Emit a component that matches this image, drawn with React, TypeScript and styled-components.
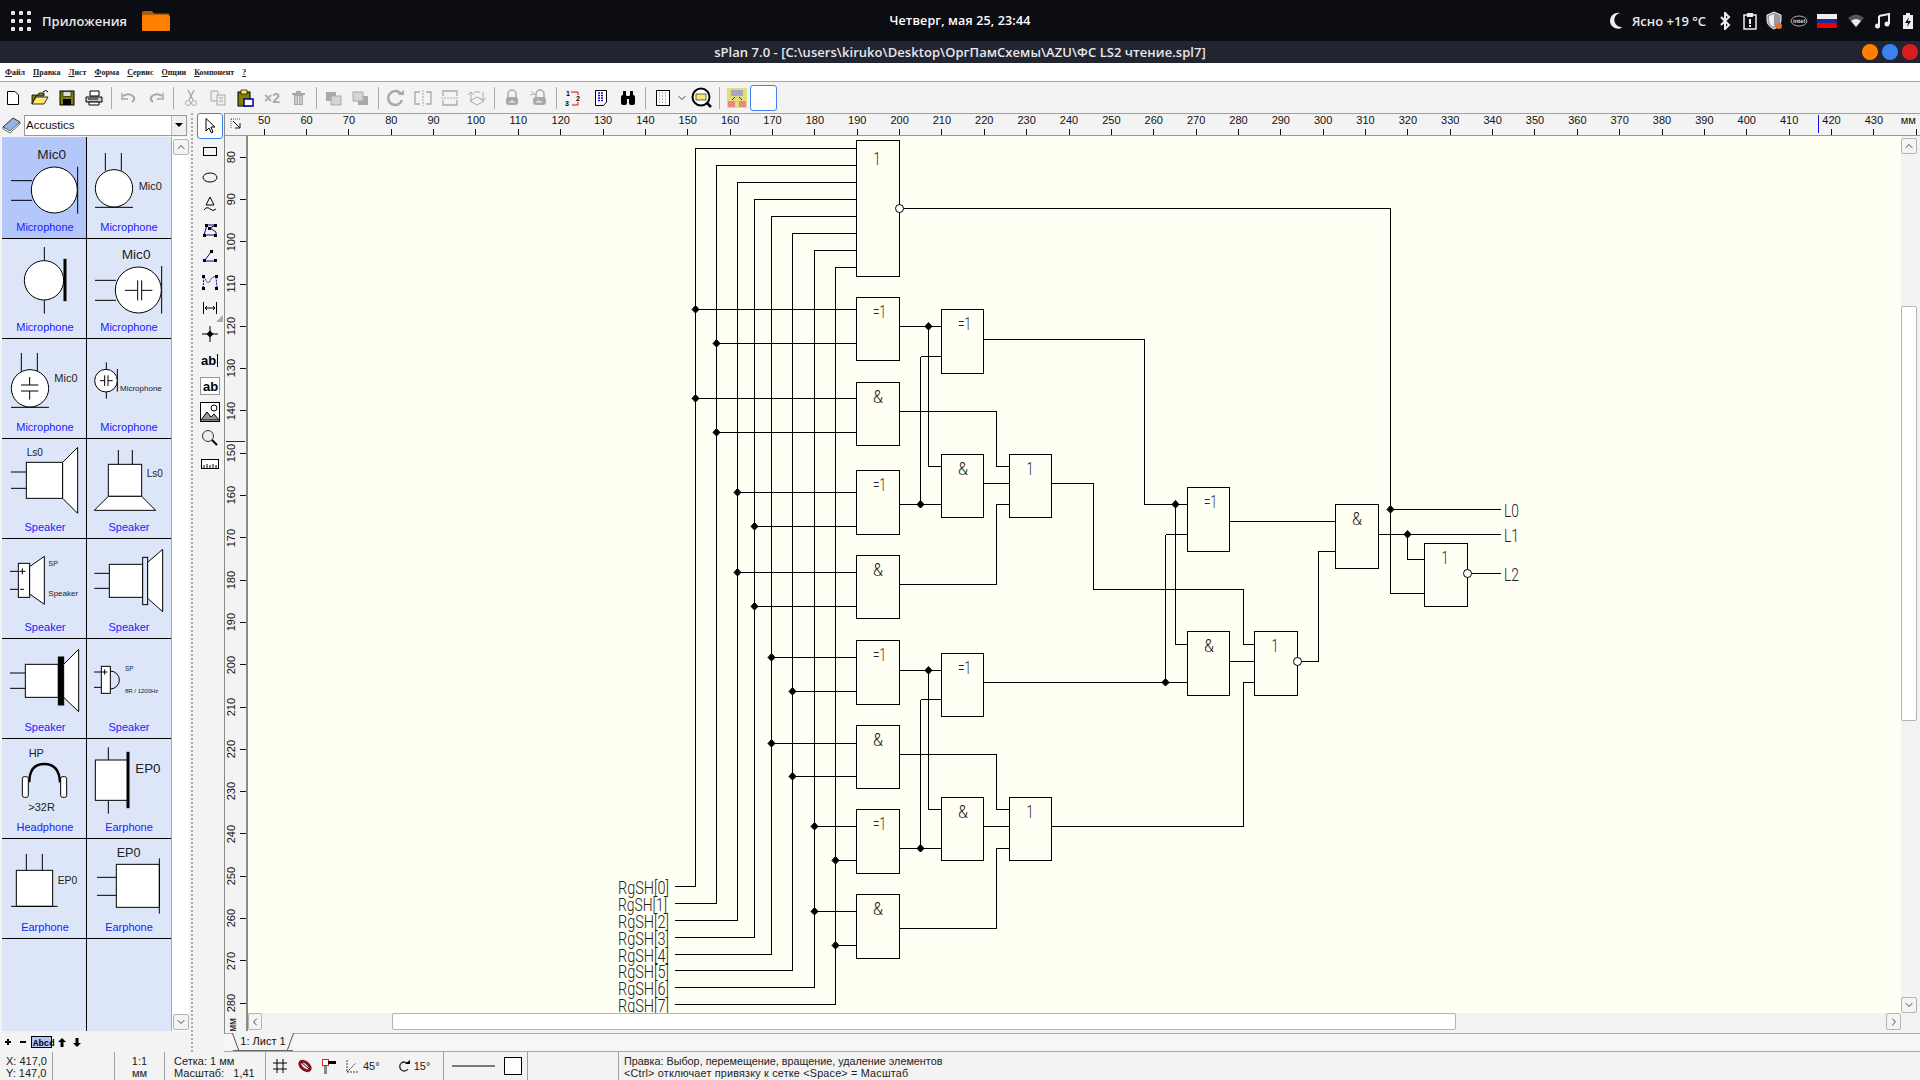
import React from "react";
import styled, { createGlobalStyle } from "styled-components";
import { ChevronUp, ChevronDown, ChevronLeft, ChevronRight } from "lucide-react";

const GlobalStyle = createGlobalStyle`
  html, body { margin: 0; padding: 0; background: #f3f3f3; }
  * { box-sizing: border-box; }
`;

const Page = styled.div`
  width: 1920px;
  height: 1080px;
  display: flex;
  flex-direction: column;
  overflow: hidden;
  background: #f3f3f3;
  font-family: "Liberation Sans", Arial, sans-serif;
  color: #111;
`;

/* ---------- desktop top bar ---------- */
const TopBar = styled.header`
  height: 41px;
  flex: none;
  display: grid;
  grid-template-columns: 1fr auto 1fr;
  align-items: center;
  background: #0b0d12;
  color: #e8e8e8;
  font-family: "Open Sans", "Noto Sans", sans-serif;
  font-size: 13px;
  font-weight: 600;
`;
const TopLeft = styled.div`
  display: flex;
  align-items: center;
  padding-left: 11px;
`;
const AppsGrid = styled.div`
  display: grid;
  grid-template-columns: repeat(3, 4px);
  grid-auto-rows: 4px;
  gap: 4px;
  span { background: #e4e4e4; border-radius: 1px; }
`;
const AppsLabel = styled.span`
  margin-left: 11px;
  width: 99px;
`;
const Clock = styled.div`
  font-size: 12.5px;
  letter-spacing: 0.15px;
  color: #fff;
`;
const TopRight = styled.div`
  display: flex;
  justify-content: flex-end;
  align-items: center;
  padding-right: 6px;
  svg { display: block; flex: none; }
`;
const Weather = styled.span`
  margin: 0 12px 0 8px;
  white-space: nowrap;
`;
const TrayGap = styled.span<{ $w: number }>`
  width: ${(p) => p.$w}px;
  flex: none;
`;

const TitleBar = styled.div`
  height: 22px;
  flex: none;
  display: grid;
  grid-template-columns: 1fr auto 1fr;
  align-items: center;
  background: #22252f;
  color: #e6e8ec;
  font-family: "Open Sans", "Noto Sans", sans-serif;
  font-size: 13px;
  font-weight: 600;
  letter-spacing: 0.05px;
`;
const WindowButtons = styled.div`
  grid-column: 3;
  display: flex;
  justify-content: flex-end;
  gap: 4px;
  padding-right: 2px;
`;
const WindowButton = styled.span<{ $color: string }>`
  width: 16px;
  height: 16px;
  border-radius: 50%;
  background: ${(p) => p.$color};
`;

/* ---------- menu + toolbar ---------- */
const MenuBar = styled.nav`
  height: 19px;
  flex: none;
  display: flex;
  align-items: center;
  gap: 8px;
  padding-left: 5px;
  background: #fff;
  border-bottom: 1px solid #a8a8a8;
  font-family: "Liberation Serif", serif;
  font-size: 8px;
  font-weight: 700;
  color: #222;
  u { text-decoration: underline; }
`;

const Toolbar = styled.div`
  height: 31px;
  flex: none;
  display: flex;
  align-items: center;
  margin-left: -1px;
  padding-top: 1px;
`;
const ToolButton = styled.div`
  width: 27px;
  height: 28px;
  flex: none;
  display: flex;
  align-items: center;
  justify-content: center;
  svg { display: block; }
`;
const ToolSep = styled.div`
  width: 1px;
  height: 22px;
  flex: none;
  margin: 0 3.5px;
  background: #aaa;
`;
const Chevron = styled(ToolButton)`
  width: 12px;
`;
const ToolBlank = styled.div`
  width: 27px;
  height: 26px;
  background: #fff;
  border: 1px solid #3b82f0;
  border-radius: 3px;
`;

/* ---------- main row ---------- */
const MainRow = styled.div`
  flex: 1;
  min-height: 0;
  display: flex;
`;

const PalettePanel = styled.aside`
  width: 190px;
  flex: none;
  display: flex;
  flex-direction: column;
`;
const PaletteHead = styled.div`
  height: 24px;
  flex: none;
  display: flex;
  align-items: center;
  padding-left: 2px;
  gap: 3px;
`;
const Combo = styled.div`
  width: 163px;
  height: 21px;
  display: flex;
  align-items: center;
  justify-content: space-between;
  background: #fff;
  border: 1px solid #9a9a9a;
  padding: 0 0 1px 1px;
  font-size: 11.5px;
`;
const ComboArrow = styled.span`
  width: 15px;
  height: 19px;
  margin-bottom: -1px;
  display: flex;
  align-items: center;
  justify-content: center;
  background: #f0f0f0;
  border-left: 1px solid #bbb;
  &::after {
    content: "";
    border-left: 4px solid transparent;
    border-right: 4px solid transparent;
    border-top: 4px solid #000;
  }
`;
const PaletteBody = styled.div`
  height: 894px;
  flex: none;
  display: flex;
  padding-left: 2px;
`;
const PaletteGrid = styled.div`
  width: 169px;
  flex: none;
  display: grid;
  grid-template-columns: 85px 84px;
  grid-template-rows: 102px repeat(7, 100px) 1fr;
  background: #dde6f8;
`;
const PaletteCell = styled.div<{ $active?: boolean; $right?: boolean; $last?: boolean }>`
  display: flex;
  flex-direction: column;
  justify-content: flex-end;
  align-items: center;
  padding-bottom: 4px;
  overflow: hidden;
  background: ${(p) => (p.$active ? "#b4c7fb" : "#dde6f8")};
  border-right: ${(p) => (p.$right ? "0" : "1px solid #000")};
  border-bottom: ${(p) => (p.$last ? "0" : "1px solid #000")};
`;
const CellLabel = styled.div<{ $shift?: boolean }>`
  height: 14px;
  line-height: 14px;
  margin-left: ${(p) => (p.$shift ? "2px" : "0")};
  font-size: 11px;
  color: #2020ff;
`;
const PaletteTrack = styled.div`
  width: 18px;
  flex: none;
  display: flex;
  flex-direction: column;
  align-items: center;
  justify-content: space-between;
  padding: 2px 0 1px;
  background: #fff;
  border-left: 1px solid #a8a8a8;
`;
const ScrollButton = styled.div<{ $w?: number; $h?: number }>`
  width: ${(p) => p.$w ?? 16}px;
  height: ${(p) => p.$h ?? 16}px;
  flex: none;
  display: flex;
  align-items: center;
  justify-content: center;
  background: #f4f4f4;
  border: 1px solid #b4b4b4;
  border-radius: 2px;
  color: #444;
`;
const PaletteTools = styled.div`
  flex: 1;
  display: flex;
  align-items: center;
  padding-left: 5px;
  svg { display: block; }
`;

const Splitter = styled.div`
  width: 5px;
  flex: none;
  margin-left: 1px;
  border-left: 2px dotted #aaa;
`;

const ToolColumn = styled.div`
  width: 28px;
  flex: none;
  display: flex;
  flex-direction: column;
  align-items: center;
  position: relative;
`;
const SideTool = styled.div<{ $active?: boolean }>`
  width: 26px;
  height: 26px;
  flex: none;
  display: flex;
  align-items: center;
  justify-content: center;
  border: ${(p) => (p.$active ? "1px solid #3b82f0" : "0")};
  border-radius: 3px;
  background: ${(p) => (p.$active ? "#fff" : "transparent")};
`;
const CornerMark = styled.span`
  position: absolute;
  right: 1px;
  top: 202px;
  border-left: 7px solid transparent;
  border-bottom: 7px solid #aaa;
`;

/* ---------- workspace ---------- */
const Workspace = styled.main`
  flex: 1;
  min-width: 0;
  display: flex;
  flex-direction: column;
  border-left: 1px solid #8a8a8a;
  border-top: 1px solid #a0a0a0;
`;
const HRuler = styled.div`
  height: 22px;
  flex: none;
  display: flex;
  position: relative;
  padding-left: 18px;
  overflow: hidden;
  border-bottom: 1px solid #9a9a9a;
  font-size: 11px;
`;
const CornerIcon = styled.svg`
  position: absolute;
  left: 5px;
  top: 4px;
`;
const HTick = styled.div<{ $last?: boolean }>`
  width: 42.36px;
  flex: none;
  display: flex;
  flex-direction: column;
  align-items: center;
  justify-content: flex-end;
  span { line-height: 13px; margin-bottom: 2px; padding-right: ${(p) => (p.$last ? "16px" : "0")}; }
  &::after { content: ""; width: 1px; height: 6px; background: #111; }
`;
const HMarker = styled.span`
  position: absolute;
  left: 1593px;
  top: 1px;
  width: 1px;
  height: 18px;
  background: #1010ee;
`;
const Body = styled.div`
  height: 895px;
  flex: none;
  display: flex;
`;
const VRuler = styled.div`
  width: 23px;
  flex: none;
  position: relative;
  overflow: hidden;
  font-size: 11px;
  border-right: 2px solid #8a8a8a;
`;
const VTick = styled.div`
  height: 42.3px;
  display: flex;
  align-items: center;
  justify-content: flex-end;
  span {
    writing-mode: vertical-rl;
    transform: rotate(180deg);
    margin-right: 3px;
    line-height: 12px;
  }
  &::after { content: ""; width: 6px; height: 1px; background: #111; }
`;
const VUnit = styled.div`
  display: flex;
  justify-content: center;
  padding-right: 5px;
  span {
    writing-mode: vertical-rl;
    transform: rotate(180deg);
    line-height: 12px;
    font-size: 10px;
    margin-top: -6px;
  }
`;
const VMarker = styled.span`
  position: absolute;
  left: 1px;
  top: 305px;
  width: 19px;
  height: 1px;
  background: #1010ee;
`;
const CanvasColumn = styled.div`
  flex: 1;
  min-width: 0;
  display: flex;
  flex-direction: column;
`;
const CanvasRow = styled.div`
  height: 877px;
  flex: none;
  display: flex;
`;
const Canvas = styled.div`
  width: 1653px;
  flex: none;
  background: #fffff3;
  svg { display: block; }
`;
const VScroll = styled.div`
  flex: 1;
  display: flex;
  flex-direction: column;
  padding: 2px 0 0;
`;
const VThumb = styled.div`
  width: 16px;
  height: 415px;
  margin-top: 152px;
  margin-bottom: 276px;
  background: #fff;
  border: 1px solid #b4b4b4;
  border-radius: 2px;
`;
const HScroll = styled.div`
  height: 17px;
  flex: none;
  display: flex;
`;
const HThumb = styled.div`
  width: 1064px;
  margin-left: 130px;
  margin-right: 430px;
  background: #fff;
  border: 1px solid #b4b4b4;
  border-radius: 2px;
`;
const TabRow = styled.div`
  flex: 1;
  margin-left: -1px;
  margin-top: 2px;
  display: flex;
  padding-left: 9px;
  background: #f6f6f6;
  border-top: 1px solid #a8a8a8;
  border-bottom: 1px solid #a8a8a8;
`;
const Tab = styled.div`
  position: relative;
  width: 60px;
  height: 18px;
  margin-top: -1px;
  background: #f3f3f3;
  border-bottom: 1px solid #666;
  font-size: 11px;
  line-height: 17px;
  text-align: center;
  &::before, &::after {
    content: "";
    position: absolute;
    top: 0;
    bottom: 0;
    width: 1px;
    background: #555;
  }
  &::before { left: 2px; transform: skewX(20deg); }
  &::after { right: 2px; transform: skewX(-20deg); }
`;

/* ---------- status bar ---------- */
const StatusBar = styled.footer`
  height: 28px;
  flex: none;
  display: flex;
  font-size: 11px;
  line-height: 12px;
  color: #222;
`;
const StatusCell = styled.div<{ $w: number; $center?: boolean; $pad?: number }>`
  width: ${(p) => p.$w}px;
  flex: none;
  padding: 3px 0 0 ${(p) => (p.$center ? 0 : p.$pad ?? 6)}px;
  text-align: ${(p) => (p.$center ? "center" : "left")};
  white-space: pre;
  border-right: 1px solid #a0a0a0;
`;
const StatusTools = styled.div<{ $w: number; $gap: number; $pad: number }>`
  width: ${(p) => p.$w}px;
  flex: none;
  display: flex;
  align-items: center;
  gap: ${(p) => p.$gap}px;
  padding-left: ${(p) => p.$pad}px;
  border-right: 1px solid #a0a0a0;
  svg { display: block; flex: none; }
`;
const StatusValue = styled.span`
  display: flex;
  align-items: center;
  gap: 3px;
`;
const RotateValue = styled(StatusValue)`
  margin-left: 8px;
`;
const StatusHint = styled.div`
  padding: 3px 0 0 5px;
  font-size: 10.8px;
  white-space: pre;
`;
const HintWide = styled.div`
  letter-spacing: 0.2px;
`;

const Art = styled.svg`
  display: block;
  flex: none;
  text { font-family: "Liberation Sans", Arial, sans-serif; fill: #222; stroke: none; }
`;

const DIAGRAM_FONT = { fontFamily: "Roboto, 'Liberation Sans', sans-serif", fontWeight: 300, fill: "#222" };

/* ---------- palette symbols, drawn in 3x units ---------- */
const Sym = ({ children }: { children: React.ReactNode }) => (
  <Art width={84} height={81} viewBox="0 0 252 243">
    <g fill="none" stroke="#000" strokeWidth={3}>{children}</g>
  </Art>
);

const palette: { label: string; art?: React.ReactNode; active?: boolean }[] = [
  { label: "Microphone", active: true, art: <>
    <path d="M27 125H90M27 184H90M227 83V224" />
    <circle cx={157} cy={153} r={69} fill="#fff" />
    <text x={106} y={61} fontSize={41}>Mic0</text>
  </> },
  { label: "Microphone", art: <>
    <path d="M55 42V95M103 42V95M24 205H138" />
    <circle cx={81} cy={148} r={56} fill="#fff" />
    <text x={155} y={153} fontSize={33}>Mic0</text>
  </> },
  { label: "Microphone", art: <>
    <path d="M127 24V64M127 184V224" />
    <circle cx={126} cy={124} r={59} fill="#fff" />
    <rect x={186} y={61} width={6} height={124} fill="#000" />
  </> },
  { label: "Microphone", art: <>
    <path d="M24 124H87M24 184H87M224 81V224" />
    <circle cx={154} cy={153} r={69} fill="#fff" />
    <path d="M114 154H152M152 124V184M164 124V184M164 154H196" />
    <text x={104} y={59} fontSize={41}>Mic0</text>
  </> },
  { label: "Microphone", art: <>
    <path d="M58 42V98M106 42V98M27 205H141" />
    <circle cx={84} cy={148} r={56} fill="#fff" />
    <path d="M57 138H109M57 156H109M83 114V138M83 156V182" />
    <text x={157} y={129} fontSize={33}>Mic0</text>
  </> },
  { label: "Microphone", art: <>
    <path d="M58 70V91M58 159V179M91 90V158" />
    <circle cx={57} cy={125} r={34} fill="#fff" />
    <path d="M39 125H53M53 109V141M63 109V141M63 125H77" />
    <text x={99} y={155} fontSize={24}>Microphone</text>
  </> },
  { label: "Speaker", art: <>
    <path d="M27 99H73M27 148H73" />
    <rect x={73} y={70} width={109} height={108} fill="#fff" />
    <path d="M182 70L227 25V223L182 178Z" fill="#fff" />
    <text x={74} y={51} fontSize={30}>Ls0</text>
  </> },
  { label: "Speaker", art: <>
    <path d="M94 33V76M136 33V76" />
    <rect x={64} y={76} width={100} height={96} fill="#fff" />
    <path d="M64 172L22 214H206L164 172Z" fill="#fff" />
    <text x={179} y={115} fontSize={30}>Ls0</text>
  </> },
  { label: "Speaker", art: <>
    <path d="M24 97H49M24 151H49" />
    <rect x={49} y={73} width={34} height={102} fill="#fff" />
    <path d="M83 83L127 52V196L83 165Z" fill="#fff" />
    <path d="M61 88V106M52 97H70M54 151H66" />
    <text x={139} y={82} fontSize={22}>SP</text>
    <text x={139} y={172} fontSize={24}>Speaker</text>
  </> },
  { label: "Speaker", art: <>
    <path d="M22 103H67M22 148H67" />
    <rect x={67} y={76} width={100} height={99} fill="#fff" />
    <rect x={167} y={55} width={15} height={142} fill="#dde6f8" />
    <path d="M182 70L227 31V218L182 178Z" fill="#fff" />
  </> },
  { label: "Speaker", art: <>
    <path d="M24 102H70M24 148H70" />
    <rect x={70} y={76} width={99} height={99} fill="#fff" />
    <rect x={169} y={54} width={16} height={144} fill="#000" />
    <path d="M185 76L230 31V218L185 175Z" fill="#fff" />
  </> },
  { label: "Speaker", art: <>
    <path d="M21 99H43M21 145H43" />
    <rect x={43} y={82} width={27} height={81} fill="#fff" />
    <path d="M70 96A27 27 0 0 1 70 150" />
    <path d="M53 91V107M45 99H61" />
    <text x={114} y={97} fontSize={19}>SP</text>
    <text x={114} y={163} fontSize={18}>8R / 1200Hz</text>
  </> },
  { label: "Headphone", art: <>
    <path d="M82 130C82 90 100 75 127 75C154 75 172 90 174 130" strokeWidth={7} />
    <rect x={61} y={113} width={18} height={62} rx={6} fill="#fff" />
    <rect x={176} y={113} width={18} height={62} rx={6} fill="#fff" />
    <text x={80} y={53} fontSize={33}>HP</text>
    <text x={79} y={215} fontSize={33}>&gt;32R</text>
  </> },
  { label: "Earphone", art: <>
    <path d="M64 25V63M64 184V224" />
    <rect x={25} y={63} width={99} height={121} fill="#fff" />
    <rect x={120} y={40} width={6} height={166} fill="#000" />
    <text x={145} y={101} fontSize={40}>EP0</text>
  </> },
  { label: "Earphone", art: <>
    <path d="M73 45V94M121 45V94" />
    <rect x={43} y={94} width={109} height={108} fill="#fff" />
    <path d="M27 202H167" />
    <text x={167} y={136} fontSize={31}>EP0</text>
  </> },
  { label: "Earphone", art: <>
    <path d="M30 115H88M30 169H88" />
    <rect x={88} y={76} width={129} height={129} fill="#fff" />
    <path d="M217 58V224" />
    <text x={89} y={55} fontSize={38}>EP0</text>
  </> },
];

/* ---------- schematic, in page coordinates ---------- */
type Gate = { x: number; y: number; w: number; h: number; t: string };
const gates: Gate[] = [
  { x: 856, y: 140, w: 43, h: 136, t: "1" },
  { x: 856, y: 297, w: 43, h: 63, t: "=1" },
  { x: 941, y: 309, w: 42, h: 64, t: "=1" },
  { x: 856, y: 382, w: 43, h: 63, t: "&" },
  { x: 856, y: 470, w: 43, h: 64, t: "=1" },
  { x: 941, y: 454, w: 42, h: 63, t: "&" },
  { x: 1009, y: 454, w: 42, h: 63, t: "1" },
  { x: 856, y: 555, w: 43, h: 63, t: "&" },
  { x: 856, y: 640, w: 43, h: 64, t: "=1" },
  { x: 941, y: 653, w: 42, h: 63, t: "=1" },
  { x: 856, y: 725, w: 43, h: 63, t: "&" },
  { x: 856, y: 809, w: 43, h: 64, t: "=1" },
  { x: 941, y: 797, w: 42, h: 63, t: "&" },
  { x: 1009, y: 797, w: 42, h: 63, t: "1" },
  { x: 856, y: 894, w: 43, h: 64, t: "&" },
  { x: 1187, y: 487, w: 42, h: 64, t: "=1" },
  { x: 1187, y: 631, w: 42, h: 64, t: "&" },
  { x: 1254, y: 631, w: 43, h: 64, t: "1" },
  { x: 1335, y: 504, w: 43, h: 64, t: "&" },
  { x: 1424, y: 543, w: 43, h: 63, t: "1" },
];

const busX = [695, 716, 737, 754, 771, 792, 814, 835];
const busTop = [148, 165, 182, 199, 216, 233, 250, 267];
const busBottom = [886, 903, 920, 937, 954, 970, 987, 1004];

const taps = [
  [695, 309], [716, 343], [695, 398], [716, 432],
  [737, 492], [754, 526], [737, 572], [754, 606],
  [771, 657], [792, 691], [771, 743], [792, 776],
  [814, 826], [835, 860], [814, 911], [835, 945],
];

const wires = [
  "899,208 1390,208 1390,593 1424,593",
  "899,326 941,326",
  "928,326 928,466 941,466",
  "920,356 941,356",
  "920,356 920,504",
  "899,504 941,504",
  "899,411 996,411 996,466 1009,466",
  "983,483 1009,483",
  "899,584 996,584 996,504 1009,504",
  "983,339 1144,339 1144,504 1187,504",
  "1051,483 1093,483 1093,589 1243,589 1243,644 1254,644",
  "899,670 941,670",
  "928,670 928,809 941,809",
  "920,699 941,699",
  "920,699 920,848",
  "899,848 941,848",
  "899,754 996,754 996,809 1009,809",
  "983,826 1009,826",
  "899,928 996,928 996,848 1009,848",
  "983,682 1187,682",
  "1051,826 1243,826 1243,682 1254,682",
  "1175,504 1175,644 1187,644",
  "1165,534 1187,534",
  "1165,534 1165,682",
  "1229,661 1254,661",
  "1229,521 1335,521",
  "1297,661 1318,661 1318,551 1335,551",
  "1378,534 1500,534",
  "1390,509 1500,509",
  "1407,534 1407,559 1424,559",
  "1467,573 1500,573",
];

const dots = [
  ...taps,
  [928, 326], [920, 504], [928, 670], [920, 848],
  [1175, 504], [1165, 682], [1390, 509], [1407, 534],
];

const bubbles = [[899, 208], [1297, 661], [1467, 573]];

const gateTextX = (g: Gate) => g.x + (g.t === "1" ? 21 : g.t === "&" ? 22 : 23.5);
const gateTextY = (g: Gate) => g.y + (g.t === "1" ? (g.h > 100 ? 25 : 21) : 21);

const Schematic = () => (
  <svg width={1653} height={877} viewBox="248 136 1653 877">
    <g transform="translate(.5 .5)" fill="none" stroke="#000" strokeWidth={1} shapeRendering="crispEdges">
      {busX.map((x, i) => (
        <polyline key={x} points={`674,${busBottom[i]} ${x},${busBottom[i]} ${x},${busTop[i]} 856,${busTop[i]}`} />
      ))}
      {taps.map(([x, y]) => <polyline key={`${x}-${y}`} points={`${x},${y} 856,${y}`} />)}
      {wires.map((w) => <polyline key={w} points={w} />)}
      {gates.map((g) => <rect key={`${g.x}-${g.y}`} x={g.x} y={g.y} width={g.w} height={g.h} fill="#fffff3" />)}
    </g>
    {dots.map(([x, y]) => (
      <path key={`d${x}-${y}`} d={`M${x + 0.5} ${y - 3.5}L${x + 4} ${y + 0.5}L${x + 0.5} ${y + 4}L${x - 3} ${y + 0.5}Z`} fill="#000" stroke="#000" strokeLinejoin="round" />
    ))}
    {bubbles.map(([x, y]) => (
      <circle key={`b${x}`} cx={x + 0.5} cy={y + 0.5} r={4} fill="#fff" stroke="#000" />
    ))}
    {gates.map((g) => (
      <text
        key={`t${g.x}-${g.y}`}
        x={gateTextX(g)}
        y={gateTextY(g)}
        fontSize={18}
        textAnchor="middle"
        textLength={g.t === "=1" ? 13 : g.t === "&" ? 10 : 7}
        lengthAdjust="spacingAndGlyphs"
        {...DIAGRAM_FONT}
      >
        {g.t}
      </text>
    ))}
    {busBottom.map((y, i) => (
      <text key={y} x={618} y={y + 8} fontSize={19} textLength={i === 1 ? 49 : 51} lengthAdjust="spacingAndGlyphs" {...DIAGRAM_FONT}>
        {`RgSH[${i}]`}
      </text>
    ))}
    {[["L0", 509], ["L1", 534], ["L2", 573]].map(([t, y]) => (
      <text key={t} x={1504} y={Number(y) + 8} fontSize={19} textLength={15} lengthAdjust="spacingAndGlyphs" {...DIAGRAM_FONT}>
        {t}
      </text>
    ))}
  </svg>
);

/* ---------- toolbar icons ---------- */
const G = "#a9a9a9";
const Ico = ({ w = 20, h = 18, children }: { w?: number; h?: number; children: React.ReactNode }) => (
  <svg width={w} height={h} viewBox={`0 0 ${w} ${h}`}>{children}</svg>
);

const topIcons: Record<string, React.ReactNode> = {
  doc: <Ico><path d="M4.5 2.5H12L15.5 6V15.5H4.5Z" fill="#fff" stroke="#000" /></Ico>,
  open: <Ico><path d="M2 6H8L9 4H14V7H6L2 15Z" fill="#808000" stroke="#000" strokeWidth={0.8} /><path d="M2 15L6 8H18L14 15Z" fill="#ffe96b" stroke="#000" strokeWidth={0.8} /><path d="M13 3Q16 0 18 3" fill="none" stroke="#000" /></Ico>,
  save: <Ico><rect x={3} y={2} width={14} height={14} fill="#808000" stroke="#000" /><rect x={6} y={2.5} width={8} height={5} fill="#ddd" stroke="#000" strokeWidth={0.6} /><rect x={6} y={10} width={8} height={6} fill="#000" /></Ico>,
  print: <Ico><path d="M6 2H15V7H6Z" fill="#fff" stroke="#000" /><path d="M2 8H18V13H2Z" fill="#ccc" stroke="#000" /><path d="M5 13H15V16H5Z" fill="#fff" stroke="#000" /><path d="M4 10H14" stroke="#000" /></Ico>,
  undo: <Ico><path d="M4 7Q10 3 15 8Q16 11 13 13" fill="none" stroke={G} strokeWidth={2} /><path d="M3 4V10H9" fill="none" stroke={G} strokeWidth={1.5} /></Ico>,
  redo: <Ico><path d="M16 7Q10 3 5 8Q4 11 7 13" fill="none" stroke={G} strokeWidth={2} /><path d="M17 4V10H11" fill="none" stroke={G} strokeWidth={1.5} /></Ico>,
  cut: <Ico><path d="M7 1L12 11M13 1L8 11" stroke={G} strokeWidth={1.4} /><circle cx={7} cy={14} r={2.5} fill="none" stroke={G} /><circle cx={13} cy={14} r={2.5} fill="none" stroke={G} /></Ico>,
  copy: <Ico><path d="M3 2H10V12H3Z" fill="#eee" stroke={G} /><path d="M9 6H17V16H9Z" fill="#eee" stroke={G} /><path d="M11 9H15M11 12H15" stroke={G} /></Ico>,
  paste: <Ico><rect x={3} y={3} width={12} height={14} fill="#808000" stroke="#000" /><path d="M6 1H12V5H6Z" fill="#ffe96b" stroke="#000" strokeWidth={0.7} /><rect x={9} y={10} width={9} height={7} fill="#fff" stroke="#00008b" strokeWidth={1.5} /></Ico>,
  twice: <Ico><text x={2} y={14} fontSize={14} fontWeight={700} fill={G} fontFamily="Liberation Sans">×2</text></Ico>,
  trash: <Ico><path d="M3 5H16M7 3H12" stroke={G} strokeWidth={2} /><path d="M5 6H14V16H5Z" fill={G} /><path d="M7 7V15M9.5 7V15M12 7V15" stroke="#eee" /></Ico>,
  front: <Ico><rect x={2} y={3} width={10} height={9} fill={G} /><rect x={7} y={7} width={10} height={9} fill="#d4d4d4" stroke={G} /></Ico>,
  back: <Ico><rect x={7} y={7} width={10} height={9} fill={G} /><rect x={2} y={3} width={10} height={9} fill="#d4d4d4" stroke={G} /></Ico>,
  rotate: <Ico><path d="M15 5A7 7 0 1 0 16 11" fill="none" stroke={G} strokeWidth={2.5} /><path d="M12 6H18V1Z" fill={G} /></Ico>,
  mirror: <Ico w={20}><path d="M7 3H2V15H7M13 3H18V15H13" fill="none" stroke={G} strokeWidth={1.3} /><path d="M10 1V17" stroke={G} strokeDasharray="2 1" /></Ico>,
  flip: <Ico><path d="M3 7V2H17V7M3 11V16H17V11" fill="none" stroke={G} strokeWidth={1.3} /><path d="M1 9H19" stroke={G} strokeDasharray="2 1" /></Ico>,
  flipd: <Ico><path d="M4 12V3M1 6L4 3L7 6M16 3V12M13 9L16 12L19 9" fill="none" stroke={G} /><path d="M3 12L10 8L17 12L10 16Z" fill="none" stroke={G} /><path d="M7 3H13" stroke={G} /></Ico>,
  lock: <Ico><path d="M6 9V5A4 4 0 0 1 14 5V9" fill="none" stroke={G} strokeWidth={1.5} /><rect x={4} y={8} width={12} height={8} rx={3} fill={G} /><path d="M10 11V13M7 13H13" stroke="#f3f3f3" /></Ico>,
  unlock: <Ico><path d="M7 9V5A4 4 0 0 1 15 5V9" fill="none" stroke={G} strokeWidth={1.5} /><rect x={4} y={8} width={13} height={8} rx={3} fill={G} /><path d="M2 2L6 6M1 6L5 5" stroke={G} /><path d="M10 11V13M7 13H13" stroke="#f3f3f3" /></Ico>,
  numbers: <Ico><text x={2} y={7} fontSize={7} fontWeight={700} fontFamily="Liberation Sans">1</text><text x={12} y={12} fontSize={7} fontWeight={700} fontFamily="Liberation Sans">2</text><text x={1} y={17} fontSize={7} fontWeight={700} fontFamily="Liberation Sans">3</text><path d="M7 3H14V6M14 13V16H8" fill="none" stroke="#e00" /></Ico>,
  list: <Ico w={16}><path d="M2.5 1.5H13.5V13L10.5 16.5H2.5Z" fill="#fff" stroke="#000" /><path d="M5 4H11M5 6.500H11M5 9H11M5 11.500H11" stroke="#1010cc" strokeWidth={1.3} strokeDasharray="2 1" /></Ico>,
  find: <Ico><rect x={3} y={6} width={6} height={10} rx={2} /><rect x={11} y={6} width={6} height={10} rx={2} /><rect x={5} y={2} width={3} height={6} /><rect x={12} y={2} width={3} height={6} /><rect x={8} y={7} width={4} height={3} /></Ico>,
  grid: <Ico w={16}><rect x={1.500} y={1.500} width={13} height={15} fill="#fff" stroke="#000" /><path d="M4 4H12M4 7H12M4 10H12M4 13H12" stroke="#666" strokeDasharray="1 2" /></Ico>,
  scope: <Ico w={22} h={22}><circle cx={10} cy={10} r={8.500} fill="#fff" stroke="#000" strokeWidth={2} /><rect x={5} y={7} width={10} height={6} fill="#ffe96b" stroke="#000" strokeWidth={0.6} /><path d="M16 16L20 20" stroke="#000" strokeWidth={2.5} /></Ico>,
  layout: <Ico w={20} h={20}><rect width={20} height={20} fill="#e2dc7a" /><rect x={4} y={2} width={12} height={6} fill="#a8a5c4" /><rect x={1} y={13} width={7} height={6} fill="#e98a80" /><rect x={12} y={13} width={7} height={6} fill="#e98a80" /><path d="M5 12L8 9M15 12L12 9" stroke="#333" /></Ico>,
};

const sideIcons: React.ReactNode[] = [
  <Ico w={16} h={18} key="a"><path d="M4 1.500V14L7 11L9.500 16L11 15L9 10H13Z" fill="#fff" stroke="#000" /></Ico>,
  <Ico w={16} h={12} key="b"><rect x={1.500} y={1.500} width={13} height={8} fill="none" stroke="#000" /></Ico>,
  <Ico w={16} h={12} key="c"><ellipse cx={8} cy={5.500} rx={7} ry={4.500} fill="none" stroke="#000" /></Ico>,
  <Ico w={16} h={18} key="d"><path d="M4 10L8 2L12 10Z" fill="none" stroke="#000" /><path d="M2 15Q5 11 8 14T14 14" fill="none" stroke="#000" /></Ico>,
  <Ico w={16} h={16} key="e"><path d="M2 13H14V10L8 6L14 3H5Z" fill="none" stroke="#00008b" /><path d="M1 12h3v3h-3zM12 12h3v3h-3zM12 2h3v3h-3zM3 2h3v3h-3zM6 5h3v3h-3z" /></Ico>,
  <Ico w={16} h={16} key="f"><path d="M3 12L9 4M3 13H14" fill="none" stroke="#00008b" /><path d="M1 11h3v3h-3zM12 11h3v3h-3zM8 2h3v3h-3z" /></Ico>,
  <Ico w={18} h={18} key="g"><path d="M2 15L3 3Q7 13 9 8T15 4L16 15" fill="none" stroke="#00008b" strokeDasharray="2 1" /><path d="M1 14h3v3h-3zM14 14h3v3h-3zM1 2h3v3h-3zM14 2h3v3h-3z" /></Ico>,
  <Ico w={16} h={16} key="h"><path d="M1.500 2V14M14.500 2V14M3 8H13M3 8L5 6M3 8L5 10M13 8L11 6M13 8L11 10" fill="none" stroke="#000" /></Ico>,
  <Ico w={18} h={18} key="i"><path d="M1 9H17M9 1V17" stroke="#000" /><path d="M9 5.500L12.500 9L9 12.500L5.500 9Z" /></Ico>,
  <Ico w={20} h={16} key="j"><text x={1} y={13} fontSize={13} fontWeight={700} fontFamily="Liberation Sans">ab</text><path d="M17.500 2V15" stroke="#000" /></Ico>,
  <Ico w={20} h={18} key="k"><rect x={.5} y={.5} width={19} height={17} fill="#fff" stroke="#333" strokeDasharray="1 1" /><text x={3} y={14} fontSize={13} fontWeight={700} fontFamily="Liberation Sans">ab</text></Ico>,
  <Ico w={20} h={20} key="l"><rect x={.5} y={.5} width={19} height={19} fill="#fff" stroke="#000" /><circle cx={14} cy={6} r={3} fill="#fff" stroke="#000" /><path d="M1 18L7 10L11 15L14 12L19 18Z" fill="#999" stroke="#000" /></Ico>,
  <Ico w={18} h={18} key="m"><circle cx={7} cy={7} r={5.500} fill="#eee" stroke="#333" /><path d="M11 11L16 16" stroke="#000" strokeWidth={2} /></Ico>,
  <Ico w={18} h={12} key="n"><rect x={.5} y={1.500} width={17} height={9} fill="#fff" stroke="#000" /><path d="M3 7V10M6 6V10M9 7V10M12 6V10M15 7V10" stroke="#000" /></Ico>,
];

const Folder = () => (
  <svg width={30} height={22} viewBox="0 0 30 22">
    <path d="M1 3Q1 1 3 1H11L13 3.500H28V8H1Z" fill="#b55a00" />
    <rect x={1} y={5} width={28} height={16} rx={1.500} fill="#ff8000" />
  </svg>
);

const menuItems: [string, string][] = [
  ["Ф", "айл"], ["П", "равка"], ["Л", "ист"], ["Ф", "орма"],
  ["С", "ервис"], ["О", "пции"], ["К", "омпонент"], ["?", ""],
];

const hLabels = Array.from({ length: 39 }, (_, i) => 50 + i * 10);
const vLabels = Array.from({ length: 21 }, (_, i) => 80 + i * 10);

export default function App() {
  return (
    <Page>
      <GlobalStyle />
      <TopBar>
        <TopLeft>
          <AppsGrid>{Array.from({ length: 9 }, (_, i) => <span key={i} />)}</AppsGrid>
          <AppsLabel>Приложения</AppsLabel>
          <Folder />
        </TopLeft>
        <Clock>Четверг, мая 25, 23:44</Clock>
        <TopRight>
          <svg width={14} height={18} viewBox="0 0 14 18"><path d="M10 1A8 8 0 1 0 13 15A7 7 0 0 1 10 1Z" fill="#eee" /></svg>
          <Weather>Ясно +19 °C</Weather>
          <svg width={14} height={18} viewBox="0 0 14 18"><path d="M3 5L11 13L7 17V1L11 5L3 13" fill="none" stroke="#eee" strokeWidth={2} /></svg>
          <TrayGap $w={10} />
          <svg width={16} height={18} viewBox="0 0 16 18"><rect x={2} y={3} width={12} height={14} fill="none" stroke="#eee" strokeWidth={1.500} /><rect x={5} y={1} width={6} height={4} fill="#eee" /><path d="M8 7V12M8 13V15" stroke="#eee" strokeWidth={2} /></svg>
          <TrayGap $w={8} />
          <svg width={18} height={20} viewBox="0 0 18 20"><path d="M8 1L15 4V9Q15 15 8 18Q1 15 1 9V4Z" fill="#999" stroke="#eee" /><path d="M8 3V16Q3 14 3 9V5Z" fill="#eee" /><circle cx={13} cy={15} r={3} fill="#f26a2a" /></svg>
          <TrayGap $w={6} />
          <svg width={18} height={12} viewBox="0 0 18 12"><ellipse cx={9} cy={6} rx={8} ry={5} fill="none" stroke="#aaa" /><text x={3} y={8} fontSize={6} fontFamily="Liberation Sans" fill="#ddd">intel</text></svg>
          <TrayGap $w={9} />
          <svg width={20} height={14} viewBox="0 0 20 14"><rect width={20} height={5} fill="#eee" /><rect y={5} width={20} height={4} fill="#1c2a9c" /><rect y={9} width={20} height={5} fill="#e00" /></svg>
          <TrayGap $w={11} />
          <svg width={16} height={14} viewBox="0 0 16 14"><path d="M0 4Q8 -3 16 4L8 13Z" fill="#555" /><path d="M3 7Q8 3 13 7L8 13Z" fill="#eee" /></svg>
          <TrayGap $w={10} />
          <svg width={16} height={16} viewBox="0 0 16 16"><path d="M5 3L15 1V11" fill="none" stroke="#eee" strokeWidth={2} /><path d="M5 3V13" stroke="#eee" strokeWidth={2} /><circle cx={3.500} cy={13} r={2.500} fill="#eee" /><circle cx={13} cy={11} r={2.500} fill="#eee" /></svg>
          <TrayGap $w={12} />
          <svg width={12} height={18} viewBox="0 0 12 18"><rect x={1} y={3} width={10} height={14} fill="#eee" /><rect x={4} y={1} width={4} height={2} fill="#eee" /><path d="M7 5L3 11H6L5 15L9 9H6Z" fill="#0b0d12" /></svg>
        </TopRight>
      </TopBar>
      <TitleBar>
        <span />
        <span>sPlan 7.0 - [C:\users\kiruko\Desktop\ОргПамСхемы\AZU\ФС LS2 чтение.spl7]</span>
        <WindowButtons>
          <WindowButton $color="#ff7f00" />
          <WindowButton $color="#3b82f0" />
          <WindowButton $color="#d81e1e" />
        </WindowButtons>
      </TitleBar>
      <MenuBar>
        {menuItems.map(([a, b], i) => <span key={i}><u>{a}</u>{b}</span>)}
      </MenuBar>
      <Toolbar>
        {["doc", "open", "save", "print"].map((k) => <ToolButton key={k}>{topIcons[k]}</ToolButton>)}
        <ToolSep />
        {["undo", "redo"].map((k) => <ToolButton key={k}>{topIcons[k]}</ToolButton>)}
        <ToolSep />
        {["cut", "copy", "paste", "twice", "trash"].map((k) => <ToolButton key={k}>{topIcons[k]}</ToolButton>)}
        <ToolSep />
        {["front", "back"].map((k) => <ToolButton key={k}>{topIcons[k]}</ToolButton>)}
        <ToolSep />
        {["rotate", "mirror", "flip", "flipd"].map((k) => <ToolButton key={k}>{topIcons[k]}</ToolButton>)}
        <ToolSep />
        {["lock", "unlock"].map((k) => <ToolButton key={k}>{topIcons[k]}</ToolButton>)}
        <ToolSep />
        {["numbers", "list", "find"].map((k) => <ToolButton key={k}>{topIcons[k]}</ToolButton>)}
        <ToolSep />
        <ToolButton>{topIcons.grid}</ToolButton>
        <Chevron><ChevronDown size={12} color="#444" /></Chevron>
        <ToolButton>{topIcons.scope}</ToolButton>
        <ToolSep />
        <ToolButton>{topIcons.layout}</ToolButton>
        <ToolBlank />
      </Toolbar>
      <MainRow>
        <PalettePanel>
          <PaletteHead>
            <svg width={19} height={17} viewBox="0 0 19 17"><path d="M1 10L11 1L18 5L8 15Z" fill="#8fb4e8" stroke="#333" /><path d="M1 10V12L8 16L18 7V5L8 14Z" fill="#fff" stroke="#333" strokeWidth={0.7} /></svg>
            <Combo>Accustics<ComboArrow /></Combo>
          </PaletteHead>
          <PaletteBody>
            <PaletteGrid>
              {palette.map((c, i) => (
                <PaletteCell key={i} $active={c.active} $right={i % 2 === 1}>
                  <Sym>{c.art}</Sym>
                  <CellLabel $shift={i % 2 === 0}>{c.label}</CellLabel>
                </PaletteCell>
              ))}
              <PaletteCell $last />
              <PaletteCell $last $right />
            </PaletteGrid>
            <PaletteTrack>
              <ScrollButton><ChevronUp size={12} /></ScrollButton>
              <ScrollButton><ChevronDown size={12} /></ScrollButton>
            </PaletteTrack>
          </PaletteBody>
          <PaletteTools>
            <svg width={78} height={14} viewBox="0 0 78 14">
              <path d="M0 7H6M3 4V10" stroke="#000" strokeWidth={2} />
              <path d="M15 7H21" stroke="#000" strokeWidth={2} />
              <rect x={26.500} y={1.500} width={20} height={11} fill="#b4c7fb" stroke="#000" />
              <text x={28} y={10.500} fontSize={9} fontWeight={700} fontFamily="Liberation Mono">Abcd</text>
              <path d="M57 3L61 7H58.500V12H55.500V7H53Z" />
              <path d="M72 12L76 8H73.500V3H70.500V8H68Z" />
            </svg>
          </PaletteTools>
        </PalettePanel>
        <Splitter />
        <ToolColumn>
          {sideIcons.map((icon, i) => <SideTool key={i} $active={i === 0}>{icon}</SideTool>)}
          <CornerMark />
        </ToolColumn>
        <Workspace>
          <HRuler>
            <CornerIcon width={12} height={12} viewBox="0 0 12 12">
              <path d="M1 1H11M1 1V11" stroke="#555" strokeDasharray="1 1" fill="none" />
              <path d="M3 3L10 10M10 5V10H5" stroke="#111" fill="none" />
            </CornerIcon>
            {hLabels.map((v) => <HTick key={v}><span>{v}</span></HTick>)}
            <HTick $last><span>мм</span></HTick>
            <HMarker />
          </HRuler>
          <Body>
            <VRuler>
              {vLabels.map((v) => <VTick key={v}><span>{v}</span></VTick>)}
              <VUnit><span>мм</span></VUnit>
              <VMarker />
            </VRuler>
            <CanvasColumn>
              <CanvasRow>
                <Canvas><Schematic /></Canvas>
                <VScroll>
                  <ScrollButton><ChevronUp size={12} /></ScrollButton>
                  <VThumb />
                  <ScrollButton><ChevronDown size={12} /></ScrollButton>
                </VScroll>
              </CanvasRow>
              <HScroll>
                <ScrollButton $w={14} $h={17}><ChevronLeft size={12} /></ScrollButton>
                <HThumb />
                <ScrollButton $w={15} $h={17}><ChevronRight size={12} /></ScrollButton>
              </HScroll>
            </CanvasColumn>
          </Body>
          <TabRow><Tab>1: Лист 1</Tab></TabRow>
        </Workspace>
      </MainRow>
      <StatusBar>
        <StatusCell $w={53}>{"X: 417,0\nY: 147,0"}</StatusCell>
        <StatusCell $w={62} />
        <StatusCell $w={50} $center>{"1:1\nмм"}</StatusCell>
        <StatusCell $w={101} $pad={9}>{"Сетка: 1 мм\nМасштаб:   1,41"}</StatusCell>
        <StatusTools $w={178} $gap={10} $pad={6}>
          <svg width={16} height={16} viewBox="0 0 16 16"><path d="M1 5H15M1 11H15M5 1V15M11 1V15" stroke="#000" /></svg>
          <svg width={14} height={14} viewBox="0 0 14 14"><ellipse cx={7} cy={7} rx={6} ry={3.500} transform="rotate(40 7 7)" fill="none" stroke="#8a1020" strokeWidth={3} /><path d="M3 3L11 10" stroke="#111" /></svg>
          <svg width={14} height={16} viewBox="0 0 14 16"><path d="M3.500 8V16" stroke="#888" strokeWidth={3} /><rect x={.5} y={1.500} width={6} height={6} fill="#fff" stroke="#d22" /><rect x={6} y={3} width={8} height={3} /></svg>
          <StatusValue>
            <svg width={14} height={14} viewBox="0 0 14 14"><path d="M1 1V13H13M1 13L10 4" fill="none" stroke="#444" strokeDasharray="2 1" /></svg>
            45°
          </StatusValue>
          <RotateValue>
            <svg width={13} height={13} viewBox="0 0 13 13"><path d="M10 4A4.500 4.500 0 1 0 10 9" fill="none" stroke="#222" strokeWidth={1.300} /><path d="M7 4H12V0Z" /></svg>
            15°
          </RotateValue>
        </StatusTools>
        <StatusTools $w={84} $gap={9} $pad={8}>
          <svg width={43} height={4} viewBox="0 0 43 4"><path d="M0 2H43" stroke="#000" /></svg>
          <svg width={18} height={18} viewBox="0 0 18 18"><rect x={.5} y={.5} width={17} height={17} fill="#fff" stroke="#000" /></svg>
        </StatusTools>
        <StatusCell $w={91} />
        <StatusHint>
          Правка: Выбор, перемещение, вращение, удаление элементов
          <HintWide>{"<Ctrl> отключает привязку к сетке <Space> = Масштаб"}</HintWide>
        </StatusHint>
      </StatusBar>
    </Page>
  );
}
